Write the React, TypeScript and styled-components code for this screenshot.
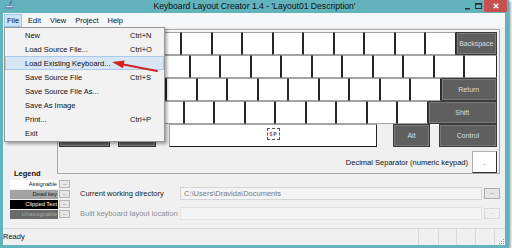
import React from "react";
import styled, { createGlobalStyle } from "styled-components";

const GlobalStyle = createGlobalStyle`
  html, body { margin: 0; padding: 0; background: #fff; }
  body {
    font-family: "Liberation Sans", Arial, sans-serif;
    font-size: 7.5px;
    color: #111;
  }
  * { box-sizing: border-box; }
`;

const TEAL = "#62b3bc";

const Window = styled.div`
  position: relative;
  width: 509px;
  height: 248px;
  display: flex;
  flex-direction: column;
  background: ${TEAL};
  box-shadow: 1px 1px 3px rgba(0, 0, 0, 0.55);
`;

const TitleBar = styled.div`
  height: 13px;
  flex: none;
  display: grid;
  grid-template-columns: 1fr auto 1fr;
  align-items: center;
`;

const AppIcon = styled.svg`
  margin-left: 5px;
  align-self: start;
`;

const Title = styled.div`
  font-size: 8.6px;
  line-height: 13px;
  color: #0e0e0e;
  white-space: nowrap;
`;

const Controls = styled.div`
  justify-self: end;
  align-self: start;
  display: flex;
  margin-right: 2px;
`;

const CaptionButton = styled.div<{ $close?: boolean }>`
  width: ${(p) => (p.$close ? 23 : 11)}px;
  height: 12px;
  display: flex;
  align-items: center;
  justify-content: center;
  background: ${(p) => (p.$close ? "#c75050" : "transparent")};
`;

const Frame = styled.div`
  flex: 1;
  display: flex;
  flex-direction: column;
  margin: 0 4px 3px 3px;
  background: #f0f0f0;
`;

const MenuBar = styled.div`
  height: 14px;
  flex: none;
  display: flex;
  align-items: flex-end;
  gap: 3px;
  padding-left: 1px;
  background: #f6f7f8;
`;

const MenuItem = styled.div<{ $open?: boolean }>`
  height: 13px;
  line-height: 11px;
  padding: 0 2px;
  border: 1px solid ${(p) => (p.$open ? "#99c9ef" : "transparent")};
  background: ${(p) => (p.$open ? "#cce4f7" : "transparent")};
`;

const Dropdown = styled.div`
  position: absolute;
  left: 4px;
  top: 27px;
  width: 161px;
  padding-bottom: 1px;
  background: #f2f2f2;
  border: 1px solid #979797;
  box-shadow: 2px 2px 3px rgba(0, 0, 0, 0.35);
  z-index: 2;
`;

const DropItem = styled.div<{ $active?: boolean }>`
  height: 14px;
  display: grid;
  grid-template-columns: 105px auto;
  align-items: center;
  padding-left: 19px;
  border: 1px solid ${(p) => (p.$active ? "#a9c9ee" : "transparent")};
  background: ${(p) => (p.$active ? "#d7e6f6" : "transparent")};
  white-space: nowrap;
`;

const Arrow = styled.svg`
  position: absolute;
  left: 108px;
  top: 56px;
  z-index: 3;
`;

const Body = styled.div`
  flex: 1;
  display: flex;
  flex-direction: column;
`;

const Panel = styled.div`
  margin: 2px 0 0 54px;
  width: 443px;
  height: 145px;
  padding: 2px 2px 0 1px;
  border: 1px solid #a8a8a8;
  box-shadow: inset 0 1px 0 #fff;
`;

const KeyRow = styled.div`
  display: flex;
  height: 23px;
`;

const Key = styled.div<{ $w: number; $gap?: number; $dark?: boolean; $space?: boolean }>`
  flex: none;
  width: ${(p) => p.$w}px;
  margin-left: ${(p) => p.$gap ?? 0}px;
  height: 23px;
  display: flex;
  align-items: center;
  justify-content: center;
  background: ${(p) => (p.$dark ? "#5f5f5f" : "#fff")};
  border: 1px solid;
  border-color: ${(p) =>
    p.$dark
      ? "#3a3a3a"
      : p.$space
      ? "#a3a3a3 #262626 #1a1a1a #a3a3a3"
      : "#a3a3a3 #262626 #a3a3a3 #262626"};
  box-shadow: ${(p) => (p.$dark ? "inset 0 0 0 1px #7a7a7a" : "none")};
  color: #dcdcdc;
  font-size: 7px;
`;

const SpaceMark = styled.div`
  width: 13px;
  height: 12px;
  margin-top: -3px;
  border: 1px dashed #555;
  display: flex;
  align-items: center;
  justify-content: center;
  gap: 1px;
  font-size: 4.5px;
  font-weight: bold;
  color: #333;
`;

const SpaceLetter = styled.span<{ $red?: boolean }>`
  color: ${(p) => (p.$red ? "#b02020" : "#333")};
`;

const DecimalRow = styled.div`
  margin-top: 4px;
  display: flex;
  justify-content: flex-end;
  align-items: center;
  gap: 4px;
`;

const DecimalBox = styled.div`
  width: 25px;
  height: 22px;
  background: #fff;
  border: 1px solid;
  border-color: #b0b0b0 #333 #333 #b0b0b0;
  display: flex;
  align-items: center;
  justify-content: center;
  color: #a02020;
  font-size: 8px;
`;

const Lower = styled.div`
  display: flex;
  margin-top: -5px;
  padding-left: 7px;
`;

const Legend = styled.div`
  width: 60px;
  display: flex;
  flex-direction: column;
  gap: 1px;
`;

const LegendTitle = styled.div`
  height: 10px;
  line-height: 10px;
  padding-left: 4px;
  font-weight: bold;
  font-size: 7.5px;
`;

const LegendRow = styled.div`
  display: flex;
  gap: 1px;
  height: 9px;
`;

const Swatch = styled.div<{ $bg: string; $fg: string }>`
  width: 48px;
  padding-right: 1px;
  background: ${(p) => p.$bg};
  color: ${(p) => p.$fg};
  text-align: right;
  font-size: 5.8px;
  line-height: 9px;
  white-space: nowrap;
  overflow: hidden;
`;

const LegendButton = styled.div`
  width: 11px;
  height: 8px;
  background: #e6e6e6;
  border: 1px solid #b5b5b5;
  font-size: 5px;
  line-height: 4px;
  text-align: center;
  color: #444;
`;

const FormColumn = styled.div`
  margin-left: 10px;
  padding-top: 18px;
  display: flex;
  flex-direction: column;
  gap: 7px;
`;

const FormRow = styled.div`
  display: flex;
  align-items: center;
  height: 13px;
`;

const FormLabel = styled.div<{ $disabled?: boolean }>`
  width: 100px;
  color: ${(p) => (p.$disabled ? "#8e8e8e" : "#222")};
  white-space: nowrap;
`;

const PathBox = styled.div<{ $disabled?: boolean }>`
  width: 302px;
  height: 13px;
  padding-left: 3px;
  line-height: 11px;
  background: #f4f4f4;
  border: 1px solid ${(p) => (p.$disabled ? "#e2e2e2" : "#d5d5d5")};
  color: #7a7a7a;
`;

const BrowseButton = styled.div<{ $disabled?: boolean }>`
  width: 16px;
  height: 11px;
  margin-left: 2px;
  background: ${(p) => (p.$disabled ? "#f0f0f0" : "#e5e5e5")};
  border: 1px solid ${(p) => (p.$disabled ? "#d9d9d9" : "#acacac")};
  color: ${(p) => (p.$disabled ? "#b5b5b5" : "#333")};
  font-size: 6px;
  line-height: 6px;
  text-align: center;
`;

const StatusBar = styled.div`
  height: 17px;
  flex: none;
  display: flex;
  border-top: 1px solid #d9d9d9;
`;

const StatusText = styled.div`
  flex: 1;
  line-height: 16px;
`;

const StatusCell = styled.div<{ $w: number }>`
  width: ${(p) => p.$w}px;
  border-left: 1px solid #dadada;
  display: flex;
  align-items: flex-end;
  justify-content: flex-end;
`;

type KeySpec = { w: number; label?: string; dark?: boolean; gap?: number; space?: boolean };

const W = 30.5;
const plain = (n: number): KeySpec[] => Array.from({ length: n }, () => ({ w: W }));

// left-hand modifier labels sit under the open File menu, so they are left blank
const rows: KeySpec[][] = [
  [...plain(13), { w: 41.5, label: "Backspace", dark: true }],
  [{ w: 39, dark: true }, ...plain(12), { w: 33 }],
  [{ w: 46, dark: true }, ...plain(11), { w: 56.5, label: "Return", dark: true }],
  [{ w: 33, dark: true }, ...plain(11), { w: 69.5, label: "Shift", dark: true }],
  [
    { w: 51, dark: true },
    { w: 38, gap: 8, dark: true },
    { w: 208, gap: 13, space: true },
    { w: 37, gap: 16, label: "Alt", dark: true },
    { w: 58, gap: 9, label: "Control", dark: true },
  ],
];

const fileMenu = [
  ["New", "Ctrl+N"],
  ["Load Source File...", "Ctrl+O"],
  ["Load Existing Keyboard...", ""],
  ["Save Source File", "Ctrl+S"],
  ["Save Source File As...", ""],
  ["Save As Image", ""],
  ["Print...", "Ctrl+P"],
  ["Exit", ""],
];

const legend = [
  { label: "Assignable", bg: "#ffffff", fg: "#222" },
  { label: "Dead key", bg: "#a3a3a3", fg: "#222" },
  { label: "Clipped Text", bg: "#000000", fg: "#fff" },
  { label: "Unassignable", bg: "#6a6a6a", fg: "#a9a9a9" },
];

export default function App() {
  return (
    <>
      <GlobalStyle />
      <Window>
        <TitleBar>
          <AppIcon width="9" height="10" viewBox="0 0 9 10">
            <rect x="0.5" y="5" width="8" height="4" rx="1" fill="#6f8fb0" />
            <rect x="1.5" y="6" width="6" height="1" fill="#c9d8e8" />
            <path d="M4 5 L6 0.5 L7.2 1 L5.2 5 Z" fill="#3d6fa5" />
          </AppIcon>
          <Title>Keyboard Layout Creator 1.4 - 'Layout01 Description'</Title>
          <Controls>
            <CaptionButton>
              <svg width="6" height="8" viewBox="0 0 6 8">
                <rect x="0" y="6" width="5" height="1.5" fill="#2c2c2c" />
              </svg>
            </CaptionButton>
            <CaptionButton>
              <svg width="7" height="7" viewBox="0 0 7 7">
                <rect x="0.5" y="0.5" width="6" height="5" fill="none" stroke="#2c2c2c" />
                <rect x="0.5" y="0.5" width="6" height="1.2" fill="#2c2c2c" />
              </svg>
            </CaptionButton>
            <CaptionButton $close>
              <svg width="6" height="6" viewBox="0 0 6 6">
                <path d="M0.8 0.8 L5.2 5.2 M5.2 0.8 L0.8 5.2" stroke="#fff" strokeWidth="1.4" />
              </svg>
            </CaptionButton>
          </Controls>
        </TitleBar>

        <Frame>
          <MenuBar>
            <MenuItem $open>File</MenuItem>
            <MenuItem>Edit</MenuItem>
            <MenuItem>View</MenuItem>
            <MenuItem>Project</MenuItem>
            <MenuItem>Help</MenuItem>
          </MenuBar>

          <Body>
            <Panel>
              {rows.map((row, r) => (
                <KeyRow key={r}>
                  {row.map((k, i) => (
                    <Key key={i} $w={k.w} $gap={k.gap} $dark={k.dark} $space={k.space}>
                      {k.space ? (
                        <SpaceMark>
                          <SpaceLetter $red>S</SpaceLetter>
                          <SpaceLetter>P</SpaceLetter>
                        </SpaceMark>
                      ) : (
                        k.label
                      )}
                    </Key>
                  ))}
                </KeyRow>
              ))}
              <DecimalRow>
                <span>Decimal Separator (numeric keypad)</span>
                <DecimalBox>.</DecimalBox>
              </DecimalRow>
            </Panel>

            <Lower>
              <Legend>
                <LegendTitle>Legend</LegendTitle>
                {legend.map((l) => (
                  <LegendRow key={l.label}>
                    <Swatch $bg={l.bg} $fg={l.fg}>{l.label}</Swatch>
                    <LegendButton>...</LegendButton>
                  </LegendRow>
                ))}
              </Legend>
              <FormColumn>
                <FormRow>
                  <FormLabel>Current working directory</FormLabel>
                  <PathBox>C:\Users\Dravida\Documents</PathBox>
                  <BrowseButton>...</BrowseButton>
                </FormRow>
                <FormRow>
                  <FormLabel $disabled>Built keyboard layout location</FormLabel>
                  <PathBox $disabled />
                  <BrowseButton $disabled>...</BrowseButton>
                </FormRow>
              </FormColumn>
            </Lower>
          </Body>

          <StatusBar>
            <StatusText>Ready</StatusText>
            <StatusCell $w={20} />
            <StatusCell $w={18} />
            <StatusCell $w={19} />
            <StatusCell $w={19} />
            <StatusCell $w={11}>
              <svg width="6" height="6" viewBox="0 0 6 6">
                <rect x="4" y="0" width="1" height="1" fill="#9a9a9a" />
                <rect x="2" y="2" width="1" height="1" fill="#9a9a9a" />
                <rect x="4" y="2" width="1" height="1" fill="#9a9a9a" />
                <rect x="0" y="4" width="1" height="1" fill="#9a9a9a" />
                <rect x="2" y="4" width="1" height="1" fill="#9a9a9a" />
                <rect x="4" y="4" width="1" height="1" fill="#9a9a9a" />
              </svg>
            </StatusCell>
          </StatusBar>
        </Frame>

        <Dropdown>
          {fileMenu.map(([label, sc], i) => (
            <DropItem key={label} $active={i === 2}>
              <span>{label}</span>
              <span>{sc}</span>
            </DropItem>
          ))}
        </Dropdown>

        <Arrow width="54" height="18" viewBox="0 0 54 18">
          <path d="M14 8.2 L49 15" stroke="#d42222" strokeWidth="2" strokeLinecap="round" />
          <path d="M4 6 L16.6 4.4 L15 12.3 Z" fill="#d42222" />
        </Arrow>
      </Window>
    </>
  );
}
